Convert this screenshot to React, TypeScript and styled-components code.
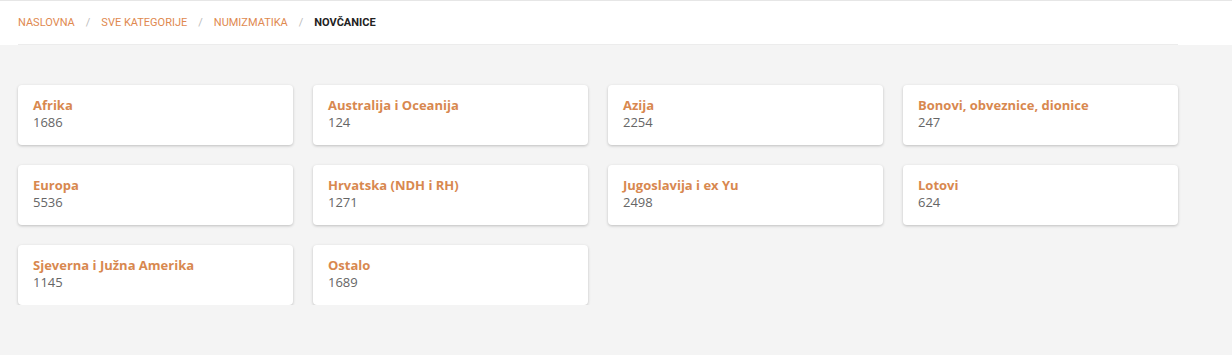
import React from "react";
import styled, { createGlobalStyle } from "styled-components";

const GlobalStyle = createGlobalStyle`
  html, body {
    margin: 0;
    padding: 0;
    background: #f4f4f4;
    font-family: Roboto, "Liberation Sans", sans-serif;
  }
`;

const Header = styled.div`
  background: #fff;
  border-top: 1px solid #e6e6e6;
`;

const HeaderInner = styled.div`
  width: 1160px;
  margin-left: 18px;
  height: 43px;
  border-bottom: 1px solid #ececec;
  display: flex;
  align-items: center;
`;

const Crumb = styled.span<{ $active?: boolean }>`
  font-size: 11px;
  text-transform: uppercase;
  color: ${(p) => (p.$active ? "#222" : "#e0894f")};
  font-weight: ${(p) => (p.$active ? 700 : 400)};
`;

const Sep = styled.span`
  font-size: 11px;
  color: #bbb;
  padding: 0 11px;
`;

const Grid = styled.div`
  width: 1160px;
  margin: 40px 0 0 18px;
  display: grid;
  grid-template-columns: repeat(4, 275px);
  gap: 20px;
`;

const Card = styled.a`
  display: block;
  height: 60px;
  box-sizing: border-box;
  padding: 12px 15px;
  background: #fff;
  border-radius: 4px;
  box-shadow: 0 1px 3px rgba(0, 0, 0, 0.22);
  text-decoration: none;
  font-family: "Open Sans", sans-serif;
`;

const Title = styled.div`
  font-size: 13px;
  font-weight: 700;
  color: #d8884f;
  line-height: 17px;
`;

const Count = styled.div`
  font-size: 13px;
  color: #666;
  line-height: 17px;
`;

const crumbs = ["Naslovna", "Sve kategorije", "Numizmatika"];

const categories: [string, number][] = [
  ["Afrika", 1686],
  ["Australija i Oceanija", 124],
  ["Azija", 2254],
  ["Bonovi, obveznice, dionice", 247],
  ["Europa", 5536],
  ["Hrvatska (NDH i RH)", 1271],
  ["Jugoslavija i ex Yu", 2498],
  ["Lotovi", 624],
  ["Sjeverna i Južna Amerika", 1145],
  ["Ostalo", 1689],
];

const App = () => {
  return (
    <>
      <GlobalStyle />
      <Header>
        <HeaderInner>
          {crumbs.map((c) => (
            <React.Fragment key={c}>
              <Crumb>{c}</Crumb>
              <Sep>/</Sep>
            </React.Fragment>
          ))}
          <Crumb $active>Novčanice</Crumb>
        </HeaderInner>
      </Header>
      <Grid>
        {categories.map(([name, count]) => (
          <Card key={name} href="#">
            <Title>{name}</Title>
            <Count>{count}</Count>
          </Card>
        ))}
      </Grid>
    </>
  );
};

export default App;
